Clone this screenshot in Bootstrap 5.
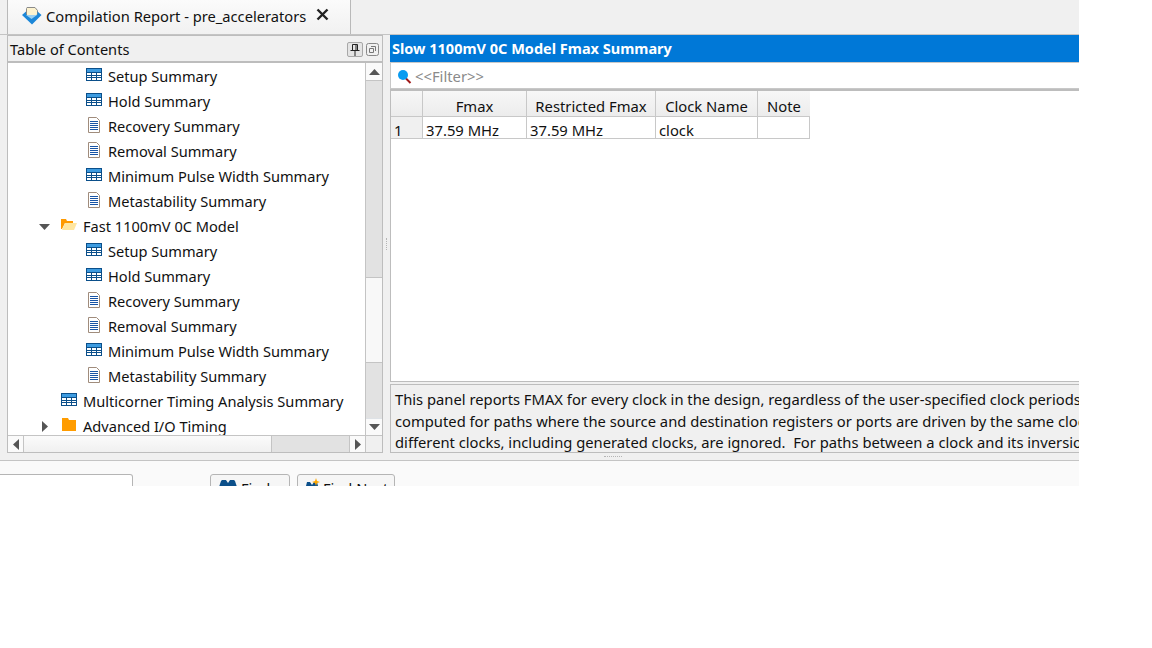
<!DOCTYPE html>
<html lang="en">
<head>
    <meta charset="UTF-8">
    <title>Compilation Report</title>
    <link href="https://cdn.jsdelivr.net/npm/bootstrap@5.3.0/dist/css/bootstrap.min.css" rel="stylesheet">
    <style>
        body { background: #fff; margin: 0; font-family: "Noto Sans", "Open Sans", sans-serif; font-size: 14.6px; color: #111; }
        .app-win { width: 1079px; height: 486px; overflow: hidden; background: #f0f0f0; }
        .tab-strip { height: 35px; flex: none; padding-left: 7px; border-bottom: 1px solid #c4c4c4; }
        .tab-item { width: 344px; height: 34px; background: linear-gradient(#fbfbfb, #f1f1f1); border: 1px solid #b9b9b9; border-top: 0; border-bottom: 0; padding: 0 0 2px 13px; gap: 3px; font-size: 14.7px; }
        .tab-x { margin-left: 7px; margin-top: -3px; }
        .work-area { height: 418px; flex: none; padding-left: 7px; }
        .toc-panel { width: 376px; flex: none; border: 1px solid #bdbdbd; }
        .toc-head { height: 27px; flex: none; padding: 2px 3px 0 2px; border-bottom: 2px solid #bdbdbd; }
        .pin-btn { width: 16px; height: 15px; border: 1px solid #a8a8a8; border-radius: 2px; background: #e4e4e4; }
        .float-btn { width: 13px; height: 15px; margin-left: 3px; }
        .toc-body { min-height: 0; }
        .toc-main { min-height: 0; }
        .tree-view { background: #fff; overflow: hidden; padding-top: 1px; min-width: 0; }
        .tree-row { height: 25px; white-space: nowrap; flex: none; }
        .lvl-1 { padding-left: 28px; }
        .lvl-2 { padding-left: 53px; }
        .lvl-3 { padding-left: 78px; }
        .twisty { width: 17px; flex: none; display: flex; justify-content: center; }
        .tree-ico { width: 16px; height: 16px; flex: none; margin-right: 6px; margin-top: -3px; }
        .sb-v { width: 17px; flex: none; border-left: 1px solid #c4c4c4; background: #e2e2e2; }
        .sb-btn-v { height: 17px; flex: none; background: #fafafa; }
        .sb-track-top { height: 197px; flex: none; border-top: 1px solid #c4c4c4; }
        .sb-thumb-v { height: 86px; flex: none; background: #f8f8f8; border-top: 1px solid #c4c4c4; border-bottom: 1px solid #c4c4c4; }
        .sb-h { height: 17px; flex: none; border-top: 1px solid #c4c4c4; background: #e2e2e2; }
        .sb-btn-h { width: 16px; flex: none; background: #fafafa; border-right: 1px solid #c4c4c4; }
        .sb-btn-end { border-left: 1px solid #c4c4c4; width: 17px; }
        .sb-thumb-h { width: 248px; flex: none; background: linear-gradient(#fbfbfb, #f0f0f0); border-right: 1px solid #c4c4c4; }
        .sb-corner { width: 16px; flex: none; background: #f0f0f0; }
        .split-v { width: 7px; flex: none; }
        .grip-dots { width: 1px; height: 12px; border-left: 1px dotted #b5b5b5; }
        .report-panel { min-width: 0; }
        .report-title { height: 27px; flex: none; background: #0078d7; color: #fff; font-weight: 700; font-size: 14.5px; padding-left: 2px; white-space: nowrap; }
        .filter-bar { height: 27px; flex: none; background: #fff; border: 1px solid #c8c8c8; border-right: 0; padding: 2px 0 0 6px; color: #8a8a8a; gap: 3px; font-size: 14.8px; }
        .grid-area { height: 293px; flex: none; background: #fff; border: 1px solid #bdbdbd; border-right: 0; border-top: 2px solid #bdbdbd; }
        .fmax-grid { border-collapse: separate; border-spacing: 0; table-layout: fixed; font-size: 14.8px; }
        .fmax-grid th { font-weight: 400; height: 26px; padding: 5px 0 0; line-height: 20px; text-align: center; background: linear-gradient(#f7f7f7, #ececec); border-right: 1px solid #c8c8c8; border-bottom: 1px solid #c8c8c8; }
        .fmax-grid td { height: 22px; padding: 5px 3px 0; line-height: 16px; border-right: 1px solid #c8c8c8; border-bottom: 1px solid #c8c8c8; }
        .fmax-grid th:last-child { border-right: 0; }
        .fmax-grid td:first-child { background: #f0f0f0; }
        .col-num { width: 32px; }
        .col-fmax { width: 104px; }
        .col-rfmax { width: 129px; }
        .col-clock { width: 102px; }
        .col-note { width: 52px; }
        .desc-box { flex: none; height: 69px; border: 1px solid #bdbdbd; border-right: 0; margin-top: 2px; padding: 4px 4px 0; line-height: 21.5px; font-size: 14.75px; white-space: nowrap; overflow: hidden; }
        .split-h { height: 7px; flex: none; }
        .grip-h { width: 18px; height: 1px; margin-left: 146px; border-top: 1px dotted #b5b5b5; }
        .bottom-bar { height: 26px; flex: none; background: #fafafa; border-top: 1px solid #c4c4c4; gap: 7px; padding-top: 13px; }
        .cmd-input { width: 133px; height: 30px; background: #fff; border: 1px solid #b5b5b5; border-left: 0; border-radius: 0 3px 0 0; margin-right: 70px; }
        .cmd-btn { height: 30px; padding: 3px 0 0 7px; background: #f6f6f6; border: 1px solid #b5b5b5; border-radius: 3px 3px 0 0; white-space: nowrap; overflow: hidden; gap: 3px; }
        .btn-find { width: 80px; }
        .btn-next { width: 98px; }
    </style>
</head>
<body>
    <svg width="0" height="0" class="d-block">
        <symbol id="ico-table" viewBox="0 0 16 16">
            <rect x="0.5" y="1.5" width="15" height="12" fill="#fff" stroke="#0b4f8a"/>
            <rect x="1" y="2" width="14" height="3" fill="#3d9be0"/>
            <path d="M1 5.5h14M1 8.5h14M1 10.5h14M5.5 6v7M10.5 6v7" stroke="#0b4f8a" fill="none"/>
        </symbol>
        <symbol id="ico-doc" viewBox="0 0 16 16">
            <path d="M2.500.5h8l3 3v12h-11z" fill="#fff" stroke="#a08c7c"/>
            <path d="M4 4.500h8M4 6.500h8M4 8.500h8M4 10.500h8M4 12.500h8" stroke="#1a55a5" fill="none"/>
        </symbol>
        <symbol id="ico-open" viewBox="0 0 16 16">
            <path d="M0 2h5l1 2h6v2H4l-3 6H0z" fill="#ff9a00"/>
            <path d="M4 6h12l-3 7H1z" fill="#ffe6a0"/>
        </symbol>
        <symbol id="ico-folder" viewBox="0 0 16 16">
            <path d="M1 1h6l1 2h7v11H1z" fill="#ff9c00"/>
        </symbol>
    </svg>

    <div class="app-win d-flex flex-column">
        <div class="tab-strip">
            <div class="tab-item d-flex align-items-center">
                <svg width="22" height="20" viewBox="0 0 22 20">
                    <path d="M6 1.500h8l2.500 3v6h-11v-8z" fill="#fdf3cf" stroke="#8a8a8a"/>
                    <path d="M1 9l4-3.500v3l5.500 2 6-2v-3l4 3.500-9.500 9.500z" fill="#1c87d8"/>
                    <path d="M5 9h11l-5.500 4z" fill="#9bd0f2"/>
                </svg>
                <span>Compilation Report - pre_accelerators</span>
                <svg class="tab-x" width="13" height="13" viewBox="0 0 13 13"><path d="M1.500 1.500l10 10M11.500 1.500l-10 10" stroke="#222" stroke-width="2.400"/></svg>
            </div>
        </div>

        <div class="work-area d-flex">
            <div class="toc-panel d-flex flex-column">
                <div class="toc-head d-flex align-items-center">
                    <span class="flex-grow-1">Table of Contents</span>
                    <span class="pin-btn d-flex align-items-center justify-content-center">
                        <svg width="10" height="12" viewBox="0 0 10 12"><path d="M2.500.5h5v6h-5zM.5 6.500h9M5 7v5M6 1v5" stroke="#222" fill="none"/></svg>
                    </span>
                    <span class="float-btn d-flex align-items-center justify-content-center">
                        <svg width="13" height="13" viewBox="0 0 13 13"><rect x=".5" y=".5" width="12" height="12" rx="2" fill="none" stroke="#888"/><path d="M5 3.500h4.500v4.500M3.500 5.500h4v4h-4z" fill="none" stroke="#777"/></svg>
                    </span>
                </div>
                <div class="toc-body d-flex flex-column flex-grow-1">
                    <div class="toc-main d-flex flex-grow-1">
                        <div class="tree-view flex-grow-1 d-flex flex-column" id="tree"></div>
                        <div class="sb-v d-flex flex-column">
                            <div class="sb-btn-v d-flex align-items-center justify-content-center">
                                <svg width="11" height="6" viewBox="0 0 11 6"><path d="M5.500 0l5.500 6H0z" fill="#555"/></svg>
                            </div>
                            <div class="sb-track-top"></div>
                            <div class="sb-thumb-v"></div>
                            <div class="flex-grow-1"></div>
                            <div class="sb-btn-v d-flex align-items-center justify-content-center border-top">
                                <svg width="11" height="6" viewBox="0 0 11 6"><path d="M0 0h11L5.500 6z" fill="#555"/></svg>
                            </div>
                        </div>
                    </div>
                    <div class="d-flex sb-h">
                        <div class="sb-btn-h d-flex align-items-center justify-content-center">
                            <svg width="6" height="11" viewBox="0 0 6 11"><path d="M6 0v11L0 5.500z" fill="#555"/></svg>
                        </div>
                        <div class="sb-thumb-h"></div>
                        <div class="flex-grow-1"></div>
                        <div class="sb-btn-h sb-btn-end d-flex align-items-center justify-content-center">
                            <svg width="6" height="11" viewBox="0 0 6 11"><path d="M0 0l6 5.500L0 11z" fill="#555"/></svg>
                        </div>
                        <div class="sb-corner"></div>
                    </div>
                </div>
            </div>

            <div class="split-v d-flex align-items-center justify-content-center"><div class="grip-dots"></div></div>

            <div class="report-panel flex-grow-1 d-flex flex-column">
                <div class="report-title d-flex align-items-center">Slow 1100mV 0C Model Fmax Summary</div>
                <div class="filter-bar d-flex align-items-center">
                    <svg width="15" height="15" viewBox="0 0 15 15"><path d="M8.500 9l5 5" stroke="#a01818" stroke-width="2"/><circle cx="6" cy="6" r="5" fill="#0a9bf0"/></svg>
                    <span>&lt;&lt;Filter&gt;&gt;</span>
                </div>
                <div class="grid-area">
                    <table class="fmax-grid">
                        <tr><th class="col-num"></th><th class="col-fmax">Fmax</th><th class="col-rfmax">Restricted Fmax</th><th class="col-clock">Clock Name</th><th class="col-note">Note</th></tr>
                        <tr><td>1</td><td>37.59 MHz</td><td>37.59 MHz</td><td>clock</td><td></td></tr>
                    </table>
                </div>
                <div class="desc-box">
                    This panel reports FMAX for every clock in the design, regardless of the user-specified clock periods. FMAX is only<br>
                    computed for paths where the source and destination registers or ports are driven by the same clock. Paths of<br>
                    different clocks, including generated clocks, are ignored.&nbsp; For paths between a clock and its inversion, FMAX
                </div>
            </div>
        </div>

        <div class="split-h d-flex align-items-center justify-content-center"><div class="grip-h"></div></div>

        <div class="bottom-bar d-flex">
            <div class="cmd-input"></div>
            <div class="cmd-btn btn-find d-flex">
                <svg width="20" height="16" viewBox="0 0 20 16"><path d="M0 12l3-9 1-1h4l2 3 2-3h4l1 1 3 9z" fill="#0b4f8a"/></svg>
                <span>Find...</span>
            </div>
            <div class="cmd-btn btn-next d-flex">
                <svg width="15" height="16" viewBox="0 0 15 16"><path d="M0 12l2-8h3l2 3 2-3h3l2 8z" fill="#0b4f8a"/><path d="M11 0l1 3 3 1-3 1-1 3-1-3-3-1 3-1z" fill="#ffa800"/></svg>
                <span>Find Next</span>
            </div>
        </div>
    </div>

    <script>
        var rows = [
            [3, "ico-table", "Setup Summary"],
            [3, "ico-table", "Hold Summary"],
            [3, "ico-doc", "Recovery Summary"],
            [3, "ico-doc", "Removal Summary"],
            [3, "ico-table", "Minimum Pulse Width Summary"],
            [3, "ico-doc", "Metastability Summary"],
            [1, "ico-open", "Fast 1100mV 0C Model", "down"],
            [3, "ico-table", "Setup Summary"],
            [3, "ico-table", "Hold Summary"],
            [3, "ico-doc", "Recovery Summary"],
            [3, "ico-doc", "Removal Summary"],
            [3, "ico-table", "Minimum Pulse Width Summary"],
            [3, "ico-doc", "Metastability Summary"],
            [2, "ico-table", "Multicorner Timing Analysis Summary"],
            [1, "ico-folder", "Advanced I/O Timing", "right"]
        ];
        var arrows = {
            down: '<svg width="11" height="6" viewBox="0 0 11 6"><path d="M0 0h11L5.500 6z" fill="#555"/></svg>',
            right: '<svg width="6" height="11" viewBox="0 0 6 11"><path d="M0 0l6 5.500L0 11z" fill="#555"/></svg>'
        };
        document.getElementById("tree").innerHTML = rows.map(function (r) {
            var twisty = r[3] ? '<span class="twisty align-items-center me-2">' + arrows[r[3]] + '</span>' : '';
            return '<div class="tree-row d-flex align-items-center lvl-' + r[0] + '">' + twisty +
                '<svg class="tree-ico"><use href="#' + r[1] + '"/></svg><span>' + r[2] + '</span></div>';
        }).join("");
    </script>
    <script src="https://cdn.jsdelivr.net/npm/bootstrap@5.3.0/dist/js/bootstrap.bundle.min.js"></script>
</body>
</html>
